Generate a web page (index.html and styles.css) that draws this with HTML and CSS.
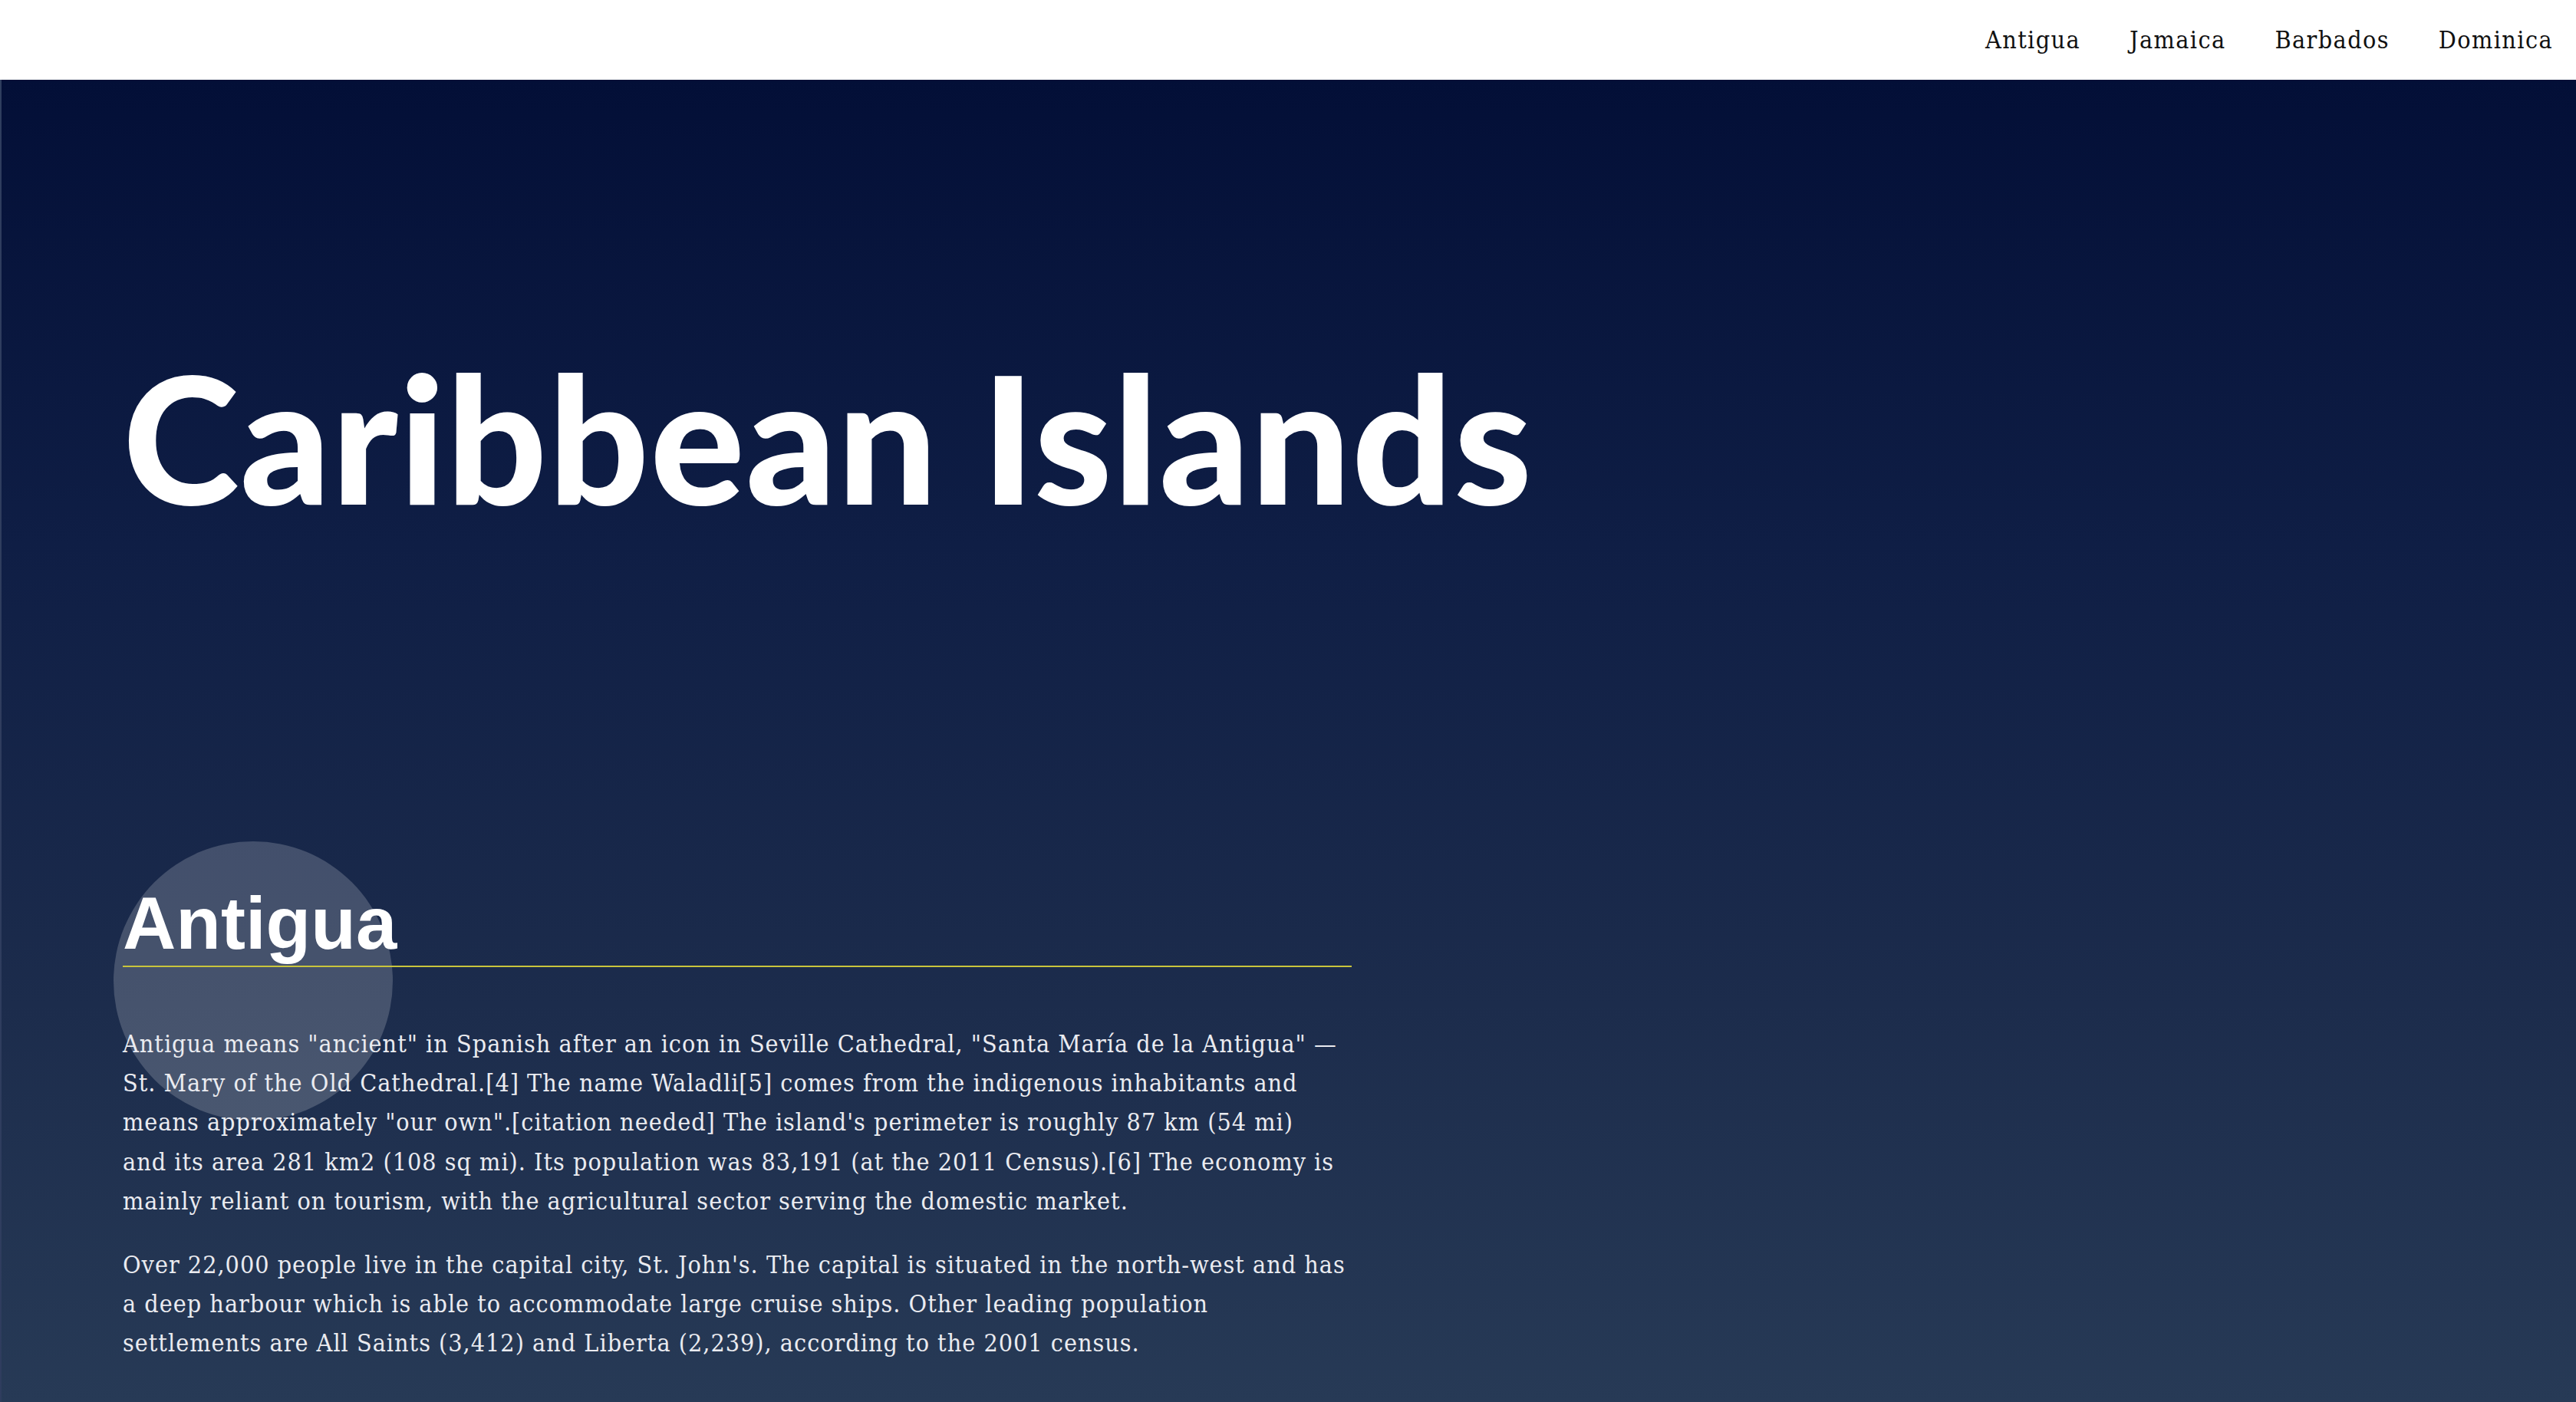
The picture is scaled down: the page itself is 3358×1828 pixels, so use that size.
FILE: index.html
```html
<!DOCTYPE html>
<html lang="en">
<head>
<meta charset="utf-8">
<title>Caribbean Islands</title>
<link rel="stylesheet" href="styles.css">
</head>
<body>
<header class="site-header">
  <nav class="nav">
    <a class="nav-link" href="#antigua">Antigua</a>
    <a class="nav-link" href="#jamaica">Jamaica</a>
    <a class="nav-link" href="#barbados">Barbados</a>
    <a class="nav-link" href="#dominica">Dominica</a>
  </nav>
</header>
<main class="hero">
  <h1 class="title">Caribbean Islands</h1>
  <section class="island" id="antigua">
    <span class="blob"></span>
    <h2 class="island-name">Antigua</h2>
    <p class="island-text">Antigua means "ancient" in Spanish after an icon in Seville Cathedral, "Santa María de la Antigua" — St. Mary of the Old Cathedral.[4] The name Waladli[5] comes from the indigenous inhabitants and means approximately "our own".[citation needed] The island's perimeter is roughly 87 km (54 mi)<br>and its area 281 km2 (108 sq mi). Its population was 83,191 (at the 2011 Census).[6] The economy is mainly reliant on tourism, with the agricultural sector serving the domestic market.</p>
    <p class="island-text">Over 22,000 people live in the capital city, St. John's. The capital is situated in the north-west and has a deep harbour which is able to accommodate large cruise ships. Other leading population settlements are All Saints (3,412) and Liberta (2,239), according to the 2001 census.</p>
  </section>
</main>
</body>
</html>
```

FILE: styles.css
```css
html, body {
  margin: 0;
  padding: 0;
  height: 100%;
}
body {
  font-family: "DejaVu Serif Condensed", "DejaVu Serif", "Liberation Serif", serif;
  font-stretch: condensed;
  letter-spacing: 1px;
  background: #ffffff;
  overflow: hidden;
}
.site-header {
  height: 104px;
  background: #ffffff;
  display: flex;
  justify-content: flex-end;
  align-items: center;
}
.nav {
  display: flex;
  gap: 64px;
  padding-right: 30px;
}
.nav-link {
  font-size: 32px;
  letter-spacing: 1.4px;
  color: #111111;
  text-decoration: none;
}
.hero {
  height: 1724px;
  box-sizing: border-box;
  padding: 350px 0 0 158px;
  background: linear-gradient(180deg, #030f37 0%, #0f1e45 35%, #1c2c4c 70%, #273a56 100%);
  border-left: 2px solid #2f3d5e;
  color: #eaebf0;
}
.title {
  margin: 0;
  font-family: "Lato", "Open Sans", sans-serif;
  font-stretch: normal;
  font-weight: 900;
  font-size: 230px;
  line-height: 1;
  letter-spacing: 1.5px;
  color: #ffffff;
}
.island {
  position: relative;
  isolation: isolate;
  width: 1602px;
  margin-top: 472px;
}
.blob {
  position: absolute;
  left: -12px;
  top: -59px;
  width: 364px;
  height: 364px;
  border-radius: 50%;
  background: rgba(255, 255, 255, 0.19);
  z-index: -1;
}
.island-name {
  margin: 0;
  font-family: "Liberation Sans", Arial, sans-serif;
  font-stretch: normal;
  font-weight: 700;
  font-size: 96px;
  line-height: 1;
  letter-spacing: 0;
  padding-bottom: 7px;
  border-bottom: 2px solid #c9c43c;
  color: #ffffff;
}
.island-text {
  margin: 32px 0 0;
  font-size: 32px;
  line-height: 1.6;
}
.island-name + .island-text {
  margin-top: 75px;
}
```
